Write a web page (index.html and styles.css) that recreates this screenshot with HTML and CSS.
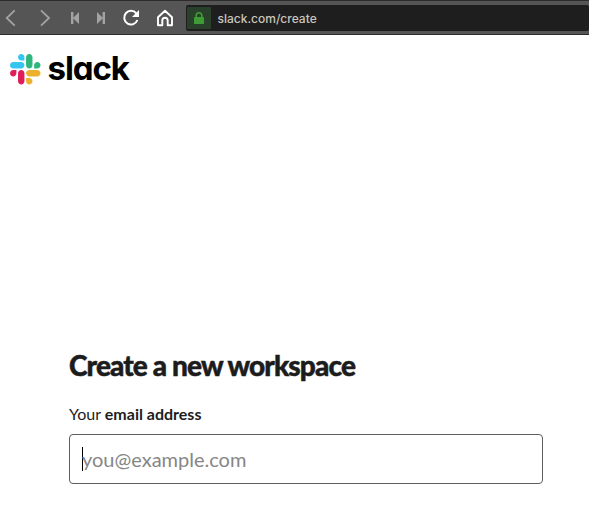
FILE: index.html
```
<!DOCTYPE html>
<html lang="en">
<head>
<meta charset="utf-8">
<title>Create a workspace | Slack</title>
<link rel="stylesheet" href="styles.css">
</head>
<body>
<header class="toolbar">
  <svg class="nav-icons" width="186" height="33" viewBox="0 1 186 33" fill="none">
    <g stroke="#a3a3a3" stroke-width="1.8">
      <path d="M14.7 10.3 6.7 18l8 7.7M41 10.3l8 7.7-8 7.7"/>
    </g>
    <g fill="#a3a3a3">
      <path d="M71 12h2.4v12H71zM79 12v12l-6-6zM97 12v12l6-6zM102.6 12h2.4v12h-2.4z"/>
    </g>
    <path d="M136.3 13.4A6.8 6.8 0 1 0 137.4 20" stroke="#fff" stroke-width="2"/>
    <path d="M139 10v7h-7z" fill="#fff"/>
    <path d="M158 17.2l7-6.4 7 6.4v8h-4.3v-4.7a2.7 2.7 0 0 0-5.4 0v4.7H158z" stroke="#fff" stroke-width="1.9" stroke-linejoin="round"/>
  </svg>
  <div class="address">
    <span class="secure">
      <svg width="10" height="12" viewBox="0 0 10 12"><path d="M2.2 6V3.6a2.8 2.8 0 0 1 5.6 0V6" fill="none" stroke="#3f9c35" stroke-width="1.6"/><rect y="5" width="10" height="7" rx=".6" fill="#3f9c35"/></svg>
    </span>
    <span class="url">slack.com/create</span>
  </div>
</header>
<div class="brand">
  <svg class="mark" width="31" height="31" viewBox="0 0 122.8 122.8">
    <path fill="#e01e5a" d="M25.8 77.6c0 7.1-5.8 12.9-12.9 12.9S0 84.7 0 77.6s5.8-12.9 12.9-12.9h12.9v12.9zM32.3 77.6c0-7.1 5.8-12.9 12.9-12.9s12.9 5.8 12.9 12.9v32.3c0 7.1-5.8 12.9-12.9 12.9s-12.9-5.8-12.9-12.9V77.6z"/>
    <path fill="#36c5f0" d="M45.2 25.8c-7.1 0-12.9-5.8-12.9-12.9S38.1 0 45.2 0s12.9 5.8 12.9 12.9v12.9H45.2zM45.2 32.3c7.1 0 12.9 5.8 12.9 12.9s-5.8 12.9-12.9 12.9H12.9C5.8 58.1 0 52.3 0 45.2s5.8-12.9 12.9-12.9h32.3z"/>
    <path fill="#2eb67d" d="M97 45.2c0-7.1 5.8-12.9 12.9-12.9s12.9 5.8 12.9 12.9-5.8 12.9-12.9 12.9H97V45.2zM90.5 45.2c0 7.1-5.8 12.9-12.9 12.9s-12.9-5.8-12.9-12.9V12.9C64.7 5.8 70.5 0 77.6 0s12.9 5.8 12.9 12.9v32.3z"/>
    <path fill="#ecb22e" d="M77.6 97c7.1 0 12.9 5.8 12.9 12.9s-5.8 12.9-12.9 12.9-12.9-5.8-12.9-12.9V97h12.9zM77.6 90.5c-7.1 0-12.9-5.8-12.9-12.9s5.8-12.9 12.9-12.9h32.3c7.1 0 12.9 5.8 12.9 12.9s-5.8 12.9-12.9 12.9H77.6z"/>
  </svg>
  <span class="wordmark">slack</span>
</div>
<main class="signup">
  <h1>Create a new workspace</h1>
  <p class="label">Your <strong>email address</strong></p>
  <div class="field"><span class="caret"></span><span class="placeholder">you@example.com</span></div>
</main>
</body>
</html>
```

FILE: styles.css
```
* { box-sizing: border-box; }
body { margin: 0; height: 525px; overflow: hidden; background: #fff; color: #1d1c1d; font-family: Lato, sans-serif; }
.toolbar { display: flex; height: 35px; background: #555; border-top: 1px solid #2d2c2d; border-bottom: 1px solid #2d2c2d; }
.nav-icons { flex: none; }
.address { display: flex; align-items: center; flex: 1; height: 26px; margin: 4px 0 0; padding-left: 1px; background: #1e1e1e; border-radius: 2px; }
.secure { display: flex; align-items: center; justify-content: center; width: 24px; height: 22px; background: #29402a; border-radius: 1px; }
.url { margin: 2px 0 0 6.5px; color: #c9c5bd; font: 500 12px/16px Inter, sans-serif; }
.brand { display: flex; align-items: center; gap: 7px; height: 31px; margin: 19px 0 0 10px; }
.mark { width: 30.5px; height: 30.5px; }
.wordmark { margin-top: -2px; color: #000; font: 700 33px/31px Inter, sans-serif; font-feature-settings: "cv11"; letter-spacing: -1.1px; }
.signup { width: 474px; margin: 263px 0 0 69px; }
h1 { margin: -1px 0 0; font-size: 28px; line-height: 36px; font-weight: 900; letter-spacing: -0.87px; white-space: nowrap; -webkit-text-stroke: 0.5px #1d1c1d; }
.label { margin: 19px 0 8px; font-size: 16px; line-height: 24px; }
.field { display: flex; align-items: center; height: 50px; padding-left: 12px; border: 1px solid #5f5e5f; border-radius: 4px; }
.caret { width: 1px; height: 24px; margin: 0 -1px 0 0; background: #000; }
.placeholder { color: #868686; font-size: 20px; line-height: 28px; }
```
